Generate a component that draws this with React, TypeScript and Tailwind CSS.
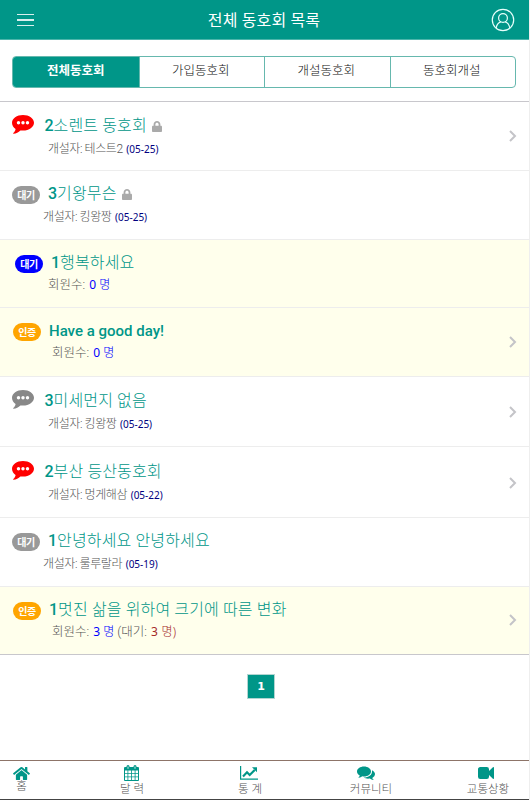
import type { ReactNode } from "react";
import { FaHome, FaLock } from "react-icons/fa";

type ClubKind = "unread" | "read" | "pending" | "waiting" | "verified";

type Club = {
  kind: ClubKind;
  count?: string;
  name: string;
  box: string;
  locked?: boolean;
  linked?: boolean;
  owner?: string;
  date?: string;
  members?: string;
  waiting?: string;
};

const CLUBS: Club[] = [
  { kind: "unread", count: "2", name: "소렌트 동호회", box: "h-[69px] pt-[13px]", locked: true, linked: true, owner: "테스트2", date: "05-25" },
  { kind: "pending", count: "3", name: "기왕무슨", box: "h-[69px] pt-3", locked: true, owner: "킹왕짱", date: "05-25" },
  { kind: "waiting", count: "1", name: "행복하세요", box: "h-[68px] pt-3", members: "0" },
  { kind: "verified", name: "Have a good day!", box: "h-[69px] pt-3", linked: true, members: "0" },
  { kind: "read", count: "3", name: "미세먼지 없음", box: "h-[70px] pt-[13px]", linked: true, owner: "킹왕짱", date: "05-25" },
  { kind: "unread", count: "2", name: "부산 등산동호회", box: "h-[71px] pt-[14px]", linked: true, owner: "멍게해삼", date: "05-22" },
  { kind: "pending", count: "1", name: "안녕하세요 안녕하세요", box: "h-[69px] pt-3", owner: "룰루랄라", date: "05-19" },
  { kind: "verified", count: "1", name: "멋진 삶을 위하여 크기에 따른 변화", box: "h-[68px] pt-3", linked: true, members: "3", waiting: "3" },
];

const KIND_STYLES: Record<
  ClubKind,
  { row: string; mark: string; title: string; sub: string; label?: string }
> = {
  unread: { row: "bg-white pl-3", mark: "w-8 text-[#ff0000]", title: "pl-[0.5px]", sub: "pl-1" },
  read: { row: "bg-white pl-3", mark: "w-8 text-[#888888]", title: "pl-[0.5px]", sub: "pl-1" },
  pending: { row: "bg-white pl-3", mark: "bg-[#999999]", title: "pl-2", sub: "pl-[3px]", label: "대기" },
  waiting: { row: "bg-[#ffffec] pl-[15px]", mark: "bg-[#0000ff]", title: "pl-2", sub: "pl-[5px]", label: "대기" },
  verified: { row: "bg-[#ffffec] pl-[13px]", mark: "bg-[#ffa500]", title: "pl-2", sub: "pl-[11px]", label: "인증" },
};

const TABS = ["전체동호회", "가입동호회", "개설동호회", "동호회개설"];

function ProfileIcon() {
  return (
    <svg viewBox="0 0 24 24" className="h-6 w-6" fill="none" stroke="#e6fffb" strokeWidth="1.2">
      <circle cx="12" cy="12" r="10.7" />
      <circle cx="12" cy="10" r="4.4" />
      <path d="M5.2 20c.4-3.2 2.2-5.2 4.6-6.1M18.8 20c-.4-3.2-2.2-5.2-4.6-6.1" />
    </svg>
  );
}

function CommentIcon() {
  return (
    <svg viewBox="0 0 22 19" className="h-[19px] w-[22px]" fill="currentColor">
      <path d="M11 0c6.1 0 11 3.500 11 7.800s-4.900 7.800-11 7.800c-.9 0-1.800-.1-2.600-.2-1.900 1.800-4.300 3-6.800 3.400-.4 0-.6-.4-.3-.7 1.200-1 2-2.300 2.300-4C1.300 12.600 0 10.400 0 7.800 0 3.500 4.900 0 11 0Z" />
      <g fill="#fff">
        <circle cx="6.500" cy="7.800" r="1.700" />
        <circle cx="11" cy="7.800" r="1.700" />
        <circle cx="15.500" cy="7.800" r="1.700" />
      </g>
    </svg>
  );
}

function CalendarIcon() {
  return (
    <svg viewBox="0 0 15 16" className="h-4 w-[15px]">
      <path fill="#009688" d="M1 2h13a1 1 0 0 1 1 1v12a1 1 0 0 1-1 1H1a1 1 0 0 1-1-1V3a1 1 0 0 1 1-1Z" />
      <path fill="#009688" d="M2.5 1.5a1.5 1.5 0 0 1 3 0v3h-3zM9.5 1.5a1.5 1.5 0 0 1 3 0v3h-3z" />
      <path stroke="#fff" strokeWidth=".8" d="M4 1.5v2.3M11 1.5v2.3" />
      <path
        fill="#fff"
        d="M1 5.6h2.5v2.3H1zM4.3 5.6h2.8v2.3H4.3zM7.9 5.6h2.8v2.3H7.9zM11.5 5.6H14v2.3h-2.5zM1 8.7h2.5v2.8H1zM4.3 8.7h2.8v2.8H4.3zM7.9 8.7h2.8v2.8H7.9zM11.5 8.7H14v2.8h-2.5zM1 12.3h2.5V15H1zM4.3 12.3h2.8V15H4.3zM7.9 12.3h2.8V15H7.9zM11.5 12.3H14V15h-2.5z"
      />
    </svg>
  );
}

function ChartIcon() {
  return (
    <svg viewBox="0 0 18 14" className="h-[14px] w-[18px]" fill="none" stroke="currentColor">
      <path d="M.6 0v13.200H18" strokeWidth="1.200" />
      <path d="m3 10.500 4-4.200 2.700 2.700 5-5" strokeWidth="2.200" />
      <path d="M12 1.200h5v5z" fill="currentColor" stroke="none" />
    </svg>
  );
}

function CommentsIcon() {
  return (
    <svg viewBox="0 0 18 14" className="h-[14px] w-[18px]" fill="currentColor">
      <path d="M7 .5c3.900 0 7 2.200 7 5s-3.100 5-7 5c-.6 0-1.200-.1-1.700-.2-1 .8-2.200 1.300-3.500 1.500-.4 0-.5-.3-.2-.5.6-.5 1-1.100 1.200-1.900C1 8.500 0 7.100 0 5.500c0-2.800 3.100-5 7-5Z" />
      <path d="M15 4.200c1.800.9 3 2.300 3 3.900 0 1.500-1 2.900-2.700 3.800.2.600.6 1.200 1.200 1.600.2.200.1.500-.2.500-1.300-.1-2.400-.6-3.400-1.400-2.400.4-4.600 0-6.200-1C11.600 11.500 15 9 15 5.500Z" />
    </svg>
  );
}

function VideoIcon() {
  return (
    <svg viewBox="0 0 16 12" className="h-3 w-4" fill="currentColor">
      <path d="M2.200 0h6.600A2.200 2.200 0 0 1 11 2.200v1.900L14.900.3c.4-.4 1.100-.1 1.100.4v10.600c0 .5-.7.8-1.100.4L11 7.900v1.900A2.200 2.200 0 0 1 8.800 12H2.200A2.200 2.200 0 0 1 0 9.800V2.200C0 1 1 0 2.200 0Z" />
    </svg>
  );
}

function Chevron() {
  return (
    <svg viewBox="0 0 8 12" className="h-3 w-2" fill="none" stroke="#c4c4c8" strokeWidth="2">
      <path d="m1 1 5 5-5 5" />
    </svg>
  );
}

function ClubRow({ club }: { club: Club }) {
  const style = KIND_STYLES[club.kind];

  return (
    <li className={`flex border-b border-[#ededed] last:border-[#c8c7cc] ${club.box} ${style.row}`}>
      {style.label ? (
        <span
          className={`mt-[3px] flex h-[18px] w-7 shrink-0 items-center justify-center rounded-full text-[10px] font-bold tracking-[-0.5px] text-white ${style.mark}`}
        >
          {style.label}
        </span>
      ) : (
        <span className={`shrink-0 ${style.mark}`}>
          <CommentIcon />
        </span>
      )}
      <div className="min-w-0 flex-1 whitespace-nowrap">
        <h2 className={`flex h-[22px] items-center text-[16px] font-light text-[#009688] ${style.title}`}>
          {club.count ? <span className="font-medium">{club.count}</span> : null}
          <span className={club.count ? "tracking-[0.15px]" : "text-[15px] font-medium"}>{club.name}</span>
          {club.locked ? (
            <FaLock className="ml-[5px] h-[11px] w-[10px] text-[#aaaaaa]" preserveAspectRatio="none" />
          ) : null}
        </h2>
        {club.owner ? (
          <p className={`mt-px h-[22px] text-[12px] font-light leading-[22px] tracking-[-0.4px] text-[#555555] ${style.sub}`}>
            개설자: {club.owner}
            <span className="ml-[3.5px] font-['Noto_Sans'] text-[10px] font-normal tracking-normal text-[#000080]">
              ({club.date})
            </span>
          </p>
        ) : (
          <p className={`h-[22px] text-[12.5px] font-light leading-[22px] text-[#555555] ${style.sub}`}>
            회원수:{" "}
            <span className="ml-px font-['Noto_Sans','Noto_Sans_CJK_KR'] text-[12px] font-normal text-[#0000ff]">
              {club.members} <span className="font-light">명</span>
            </span>
            {club.waiting ? (
              <>
                {" "}
                (대기:{" "}
                <span className="ml-px font-['Noto_Sans','Noto_Sans_CJK_KR'] text-[12px] font-normal tracking-[0.3px] text-[#a52a2a]">
                  {club.waiting} <span className="font-light">명)</span>
                </span>
              </>
            ) : null}
          </p>
        )}
      </div>
      {club.linked ? (
        <span className="mr-3 mt-[-13px] flex items-center">
          <Chevron />
        </span>
      ) : null}
    </li>
  );
}

function NavItem({ icon, label, className }: { icon: ReactNode; label: string; className: string }) {
  return (
    <a className={`flex flex-col items-center whitespace-nowrap text-[11.5px] font-light text-[#555555] ${className}`}>
      <span className="flex h-4 items-center text-[#009688]">{icon}</span>
      {label}
    </a>
  );
}

export default function App() {
  return (
    <div className="flex h-[800px] w-[530px] flex-col overflow-hidden border-r border-[#eeeeee] bg-white font-[Roboto,'Noto_Sans_CJK_KR',sans-serif]">
      <header className="flex h-10 shrink-0 items-center justify-between border-b border-[#4cb5ab] bg-[#009688] pl-[17px] pr-[14px]">
        <span className="flex w-5 flex-col gap-1 pt-px">
          <i className="h-[1.5px] w-[17px] bg-[#d9f0ee]" />
          <i className="h-[1.5px] w-[17px] bg-[#d9f0ee]" />
          <i className="h-[1.5px] w-[17px] bg-[#d9f0ee]" />
        </span>
        <h1 className="pt-[2px] text-[16px] tracking-[0.15px] text-white">전체 동호회 목록</h1>
        <ProfileIcon />
      </header>

      <nav className="ml-3 mr-[13px] mt-4 grid h-8 shrink-0 grid-cols-4 overflow-hidden rounded border border-[#66b8ae] text-[12.5px]">
        {TABS.map((tab, index) => (
          <a
            key={tab}
            className={
              index === 0
                ? "flex items-center justify-center bg-[#009688] pb-px font-bold text-white"
                : "flex items-center justify-center border-l border-[#66b8ae] pb-px pr-0.5 font-light text-[#111111]"
            }
          >
            {tab}
          </a>
        ))}
      </nav>

      <ul className="mt-[13px] shrink-0 border-t border-[#c8c7cc]">
        {CLUBS.map((club) => (
          <ClubRow key={club.name} club={club} />
        ))}
      </ul>

      <div className="flex flex-1 justify-center pr-[7px] pt-[19px]">
        <span className="flex h-[25px] w-7 items-center justify-center border border-[#b2d5d1] bg-[#009688] pt-0.5 font-['DejaVu_Sans'] text-[11px] font-bold text-white">
          1
        </span>
      </div>

      <footer className="flex h-10 shrink-0 border-b border-t border-b-[#444444] border-t-[#8d7468] pl-[13px] pt-1">
        <NavItem className="w-[17px] leading-[10px]" icon={<FaHome className="h-[15px] w-[17px]" />} label="홈" />
        <NavItem className="ml-[90px] w-6" icon={<span className="pr-0.5"><CalendarIcon /></span>} label="달 력" />
        <NavItem className="ml-[94px] w-6" icon={<span className="pr-0.5"><ChartIcon /></span>} label="통 계" />
        <NavItem className="ml-[88px] w-[42px]" icon={<span className="pr-2.5"><CommentsIcon /></span>} label="커뮤니티" />
        <NavItem className="ml-[75px] w-[42px]" icon={<span className="pr-1"><VideoIcon /></span>} label="교통상황" />
      </footer>
    </div>
  );
}
